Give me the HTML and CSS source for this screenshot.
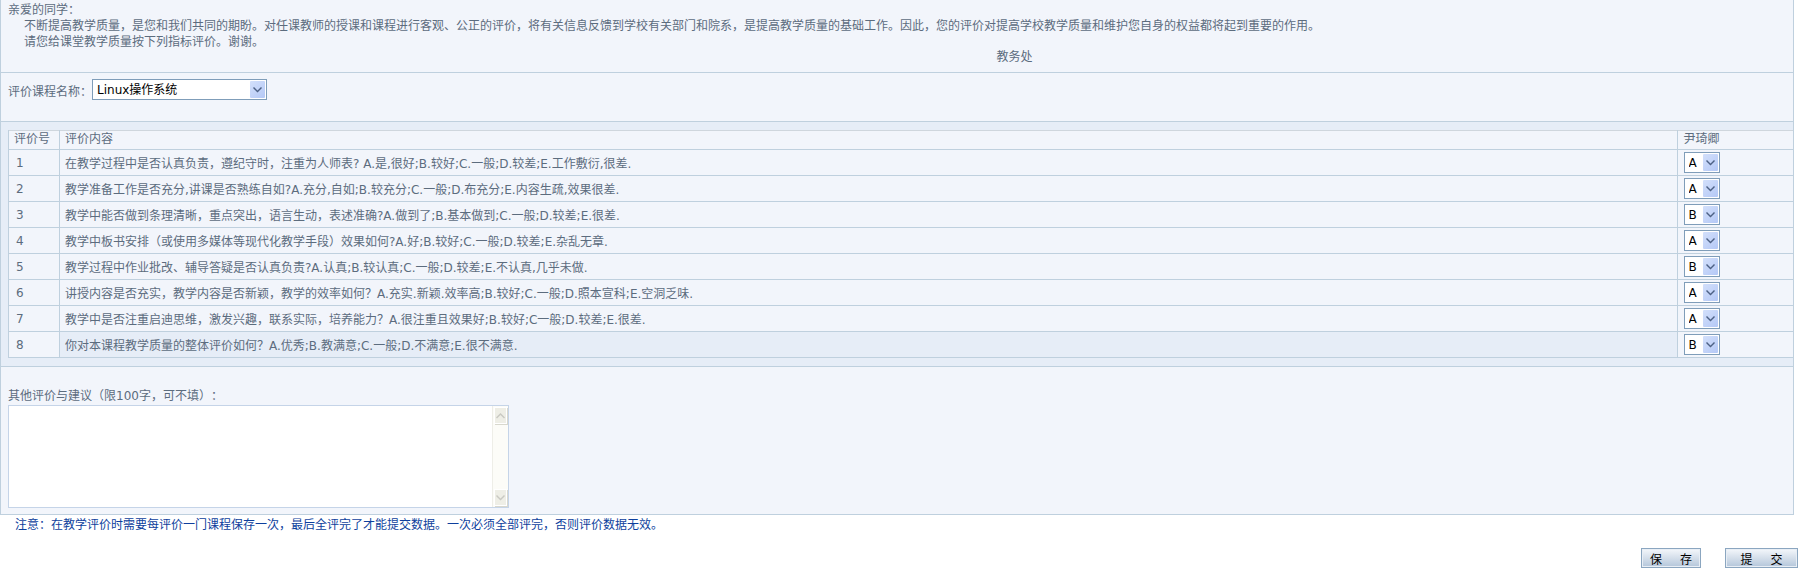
FILE: index.html
```html
<!DOCTYPE html>
<html lang="zh-CN">
<head>
    <meta charset="UTF-8">
    <title>课堂教学质量评价</title>
    <link rel="stylesheet" href="styles.css">
</head>
<body>
    <div class="panel">
        <div class="intro">
            <p>亲爱的同学：</p>
            <p class="indent">不断提高教学质量，是您和我们共同的期盼。对任课教师的授课和课程进行客观、公正的评价，将有关信息反馈到学校有关部门和院系，是提高教学质量的基础工作。因此，您的评价对提高学校教学质量和维护您自身的权益都将起到重要的作用。</p>
            <p class="indent">请您给课堂教学质量按下列指标评价。谢谢。</p>
            <p class="office">教务处</p>
        </div>

        <div class="course-row">
            <label for="course">评价课程名称：</label>
            <div class="select-box course-select">
                <select id="course">
                    <option>Linux操作系统</option>
                </select>
                <span class="select-arrow"><svg viewBox="0 0 9 6" width="9" height="6"><path d="M0 1l1-1 3.500 3.500L8 0l1 1-4.500 4.500z"/></svg></span>
            </div>
        </div>

        <div class="table-wrap">
            <table class="eval-table">
                <thead>
                    <tr>
                        <th class="col-no">评价号</th>
                        <th>评价内容</th>
                        <th class="col-teacher">尹琦卿</th>
                    </tr>
                </thead>
                <tbody>
                    <tr>
                        <td>1</td>
                        <td>在教学过程中是否认真负责，遵纪守时，注重为人师表? A.是,很好;B.较好;C.一般;D.较差;E.工作敷衍,很差.</td>
                        <td><div class="select-box grade-select"><select><option>A</option><option>B</option></select><span class="select-arrow"><svg viewBox="0 0 9 6" width="9" height="6"><path d="M0 1l1-1 3.500 3.500L8 0l1 1-4.500 4.500z"/></svg></span></div></td>
                    </tr>
                    <tr>
                        <td>2</td>
                        <td>教学准备工作是否充分,讲课是否熟练自如?A.充分,自如;B.较充分;C.一般;D.布充分;E.内容生疏,效果很差.</td>
                        <td><div class="select-box grade-select"><select><option>A</option><option>B</option></select><span class="select-arrow"><svg viewBox="0 0 9 6" width="9" height="6"><path d="M0 1l1-1 3.500 3.500L8 0l1 1-4.500 4.500z"/></svg></span></div></td>
                    </tr>
                    <tr>
                        <td>3</td>
                        <td>教学中能否做到条理清晰，重点突出，语言生动，表述准确?A.做到了;B.基本做到;C.一般;D.较差;E.很差.</td>
                        <td><div class="select-box grade-select"><select><option>B</option><option>A</option></select><span class="select-arrow"><svg viewBox="0 0 9 6" width="9" height="6"><path d="M0 1l1-1 3.500 3.500L8 0l1 1-4.500 4.500z"/></svg></span></div></td>
                    </tr>
                    <tr>
                        <td>4</td>
                        <td>教学中板书安排（或使用多媒体等现代化教学手段）效果如何?A.好;B.较好;C.一般;D.较差;E.杂乱无章.</td>
                        <td><div class="select-box grade-select"><select><option>A</option><option>B</option></select><span class="select-arrow"><svg viewBox="0 0 9 6" width="9" height="6"><path d="M0 1l1-1 3.500 3.500L8 0l1 1-4.500 4.500z"/></svg></span></div></td>
                    </tr>
                    <tr>
                        <td>5</td>
                        <td>教学过程中作业批改、辅导答疑是否认真负责?A.认真;B.较认真;C.一般;D.较差;E.不认真,几乎未做.</td>
                        <td><div class="select-box grade-select"><select><option>B</option><option>A</option></select><span class="select-arrow"><svg viewBox="0 0 9 6" width="9" height="6"><path d="M0 1l1-1 3.500 3.500L8 0l1 1-4.500 4.500z"/></svg></span></div></td>
                    </tr>
                    <tr>
                        <td>6</td>
                        <td>讲授内容是否充实，教学内容是否新颖，教学的效率如何？A.充实.新颖.效率高;B.较好;C.一般;D.照本宣科;E.空洞乏味.</td>
                        <td><div class="select-box grade-select"><select><option>A</option><option>B</option></select><span class="select-arrow"><svg viewBox="0 0 9 6" width="9" height="6"><path d="M0 1l1-1 3.500 3.500L8 0l1 1-4.500 4.500z"/></svg></span></div></td>
                    </tr>
                    <tr>
                        <td>7</td>
                        <td>教学中是否注重启迪思维，激发兴趣，联系实际，培养能力？A.很注重且效果好;B.较好;C一般;D.较差;E.很差.</td>
                        <td><div class="select-box grade-select"><select><option>A</option><option>B</option></select><span class="select-arrow"><svg viewBox="0 0 9 6" width="9" height="6"><path d="M0 1l1-1 3.500 3.500L8 0l1 1-4.500 4.500z"/></svg></span></div></td>
                    </tr>
                    <tr class="row-active">
                        <td>8</td>
                        <td>你对本课程教学质量的整体评价如何？A.优秀;B.教满意;C.一般;D.不满意;E.很不满意.</td>
                        <td><div class="select-box grade-select"><select><option>B</option><option>A</option></select><span class="select-arrow"><svg viewBox="0 0 9 6" width="9" height="6"><path d="M0 1l1-1 3.500 3.500L8 0l1 1-4.500 4.500z"/></svg></span></div></td>
                    </tr>
                </tbody>
            </table>
        </div>

        <div class="comment">
            <label for="remark">其他评价与建议（限100字，可不填）：</label>
            <div class="comment-box">
                <textarea id="remark"></textarea>
                <div class="scrollbar">
                    <span class="scroll-btn"><svg viewBox="0 0 9 6" width="9" height="6"><path d="M0 4.500l1 1 3.500-3.500L8 5.500l1-1L4.500 0z"/></svg></span>
                    <span class="scroll-track"></span>
                    <span class="scroll-btn"><svg viewBox="0 0 9 6" width="9" height="6"><path d="M0 1l1-1 3.500 3.500L8 0l1 1-4.500 4.500z"/></svg></span>
                </div>
            </div>
        </div>
    </div>

    <p class="notice">注意：在教学评价时需要每评价一门课程保存一次，最后全评完了才能提交数据。一次必须全部评完，否则评价数据无效。</p>

    <div class="actions">
        <button class="btn btn-save"><span>保</span><span>存</span></button>
        <button class="btn btn-submit"><span>提</span><span>交</span></button>
    </div>
</body>
</html>
```

FILE: styles.css
```css
* {
    box-sizing: border-box;
}

html, body {
    margin: 0;
    padding: 0;
    height: 571px;
    overflow: hidden;
}

body {
    font-family: "DejaVu Sans", "Noto Sans CJK SC", sans-serif;
    font-size: 12px;
    text-spacing-trim: space-all;
    color: #5c6c7e;
    background: #ffffff;
}

p {
    margin: 0;
}

.panel {
    width: 1794px;
    height: 515px;
    background: #f2f5fb;
    border: 1px solid #bfd0de;
    border-top: none;
}

.intro {
    height: 73px;
    padding: 2px 7px 0;
    border-bottom: 1px solid #bfd0de;
    line-height: 16px;
}

.indent {
    padding-left: 16px;
}

.office {
    text-align: center;
    padding-left: 235px;
    margin-top: -1px;
}

.course-row {
    height: 49px;
    padding: 6px 7px 0;
    display: flex;
    align-items: flex-start;
    border-bottom: 1px solid #bfd0de;
}

.course-row label {
    width: 84px;
    line-height: 26px;
    flex: none;
}

.select-box {
    position: relative;
    background: #ffffff;
    border: 1px solid #7f9db9;
}

.select-box select {
    display: block;
    width: 100%;
    height: 100%;
    border: none;
    outline: none;
    appearance: none;
    background: transparent;
    font-family: "DejaVu Sans", "Noto Sans CJK SC", sans-serif;
    font-size: 12px;
    padding-left: 4px;
    color: #000000;
}

.course-select {
    width: 175px;
    height: 21px;
}

.grade-select {
    width: 36px;
    height: 21px;
}

.select-arrow {
    position: absolute;
    top: 1px;
    right: 1px;
    bottom: 1px;
    width: 15px;
    display: flex;
    align-items: center;
    justify-content: center;
    background: linear-gradient(135deg, #d3e0fb, #b4c8f6);
    border-radius: 1px;
    pointer-events: none;
}

.select-arrow svg {
    fill: #4d6185;
}

.table-wrap {
    height: 245px;
    padding: 8px 0 9px 7px;
    background: #e6edf7;
    border-bottom: 1px solid #bfd0de;
}

.eval-table {
    width: 100%;
    height: 228px;
    border-collapse: collapse;
    table-layout: fixed;
    background: #f2f5fb;
    border-left: 1px solid #c9d3dc;
    border-top: 1px solid #cfd6dd;
}

.eval-table th {
    height: 19px;
    padding: 0 5px 3px;
    line-height: 14px;
    font-weight: normal;
    text-align: left;
    border: 1px solid #bfd0de;
    border-right: none;
    border-top: none;
}

.eval-table td {
    height: 26px;
    padding: 0 5px;
    border: 1px solid #bfd0de;
    border-right: none;
}

.eval-table td:first-child {
    padding-left: 7px;
}

.eval-table th:last-child,
.eval-table td:last-child {
    padding-left: 6px;
}

.col-no {
    width: 51px;
}

.col-teacher {
    width: 116px;
}

.row-active td:nth-child(2) {
    background: #e6edf7;
}

.comment {
    padding: 21px 7px 0;
}

.comment label {
    display: block;
    line-height: 16px;
    margin-bottom: 1px;
}

.comment-box {
    width: 501px;
    height: 103px;
    display: flex;
    background: #ffffff;
    border: 1px solid #c5d4e8;
}

.comment-box textarea {
    flex: 1;
    border: none;
    outline: none;
    resize: none;
    background: transparent;
}

.scrollbar {
    width: 16px;
    display: flex;
    flex-direction: column;
    background: #fcfcf8;
    border-left: 1px solid #eeeee8;
}

.scroll-track {
    flex: 1;
}

.scroll-btn {
    height: 17px;
    margin: 1px;
    display: flex;
    align-items: center;
    justify-content: center;
    background: #eeeee6;
    border: 1px solid #ffffff;
    box-shadow: 1px 1px 0 #d8d8ce;
}

.scroll-btn svg {
    fill: #c9c9c2;
}

.notice {
    padding: 2px 0 0 15px;
    line-height: 16px;
    color: #0e3f9d;
}

.actions {
    display: flex;
    justify-content: flex-end;
    gap: 24px;
    padding: 15px 4px 0 0;
}

.btn {
    height: 20px;
    padding: 0;
    display: flex;
    align-items: center;
    justify-content: center;
    gap: 18px;
    border: 1px solid #8ba6c0;
    background: linear-gradient(#f4f7fb, #b4c6da);
    font-family: "Noto Sans CJK SC", sans-serif;
    font-size: 12px;
    color: #000000;
    box-shadow: inset 0 0 0 1px #e8eef5;
}

.btn-save {
    width: 60px;
}

.btn-submit {
    width: 73px;
}
```
